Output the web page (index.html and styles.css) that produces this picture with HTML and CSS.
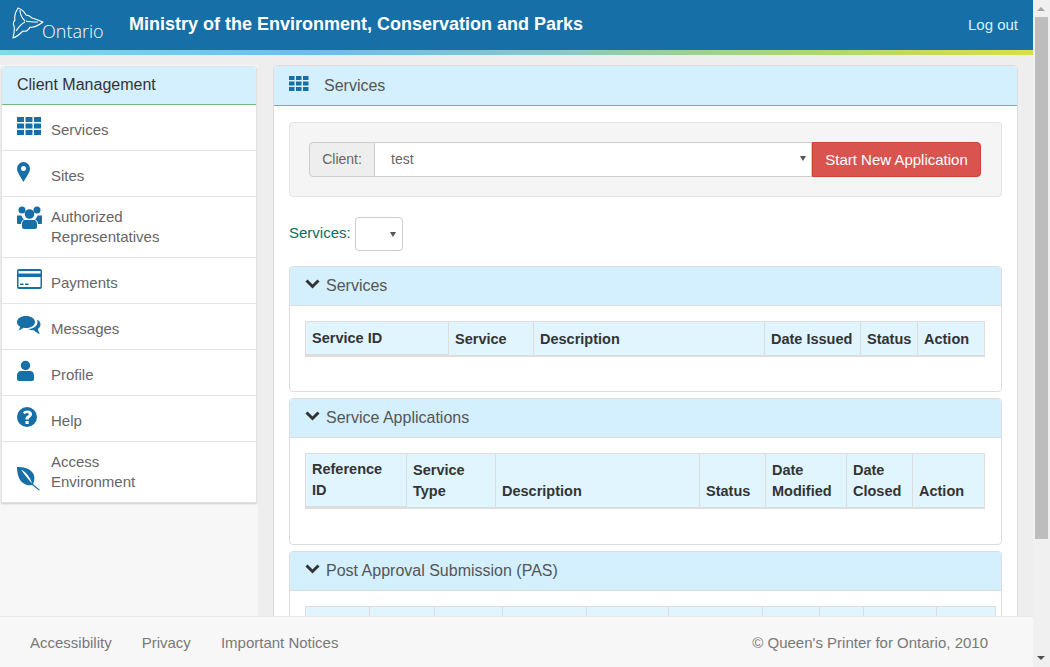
FILE: index.html
```html
<!DOCTYPE html>
<html lang="en">
<head>
    <meta charset="UTF-8">
    <title>Ministry of the Environment, Conservation and Parks</title>
    <link rel="stylesheet" href="styles.css">
</head>
<body>

<div class="window">
    <div class="viewport">

        <header class="topbar">
            <a class="logo">
                <svg class="trillium" width="34" height="32" viewBox="0 0 34 32" fill="none" stroke="#fff" stroke-width="1.1" stroke-linejoin="round">
                    <path d="M6 1 C9 2 12 4 14 8 C16 8 18 9 20 11 C24 12 28 14 31 15 C27 18 22 21 18 20 C17 23 14 25 11 24 C8 27 5 30 1 31 C2 27 3 23 2 19 C1 17 1 15 3 13 C2 9 4 4 6 1 Z"/>
                    <path d="M8 3 C8 7 10 11 13 14 M4 24 C6 21 9 17 13 15 M26 15 C22 15 17 15 14 14"/>
                </svg>
                <span class="wordmark">Ontario</span>
            </a>
            <div class="ministry">Ministry of the Environment, Conservation and Parks</div>
            <a class="logout">Log out</a>
        </header>
        <div class="strip"></div>

        <div class="layout">
            <aside class="sidebar">
                <div class="side-panel">
                    <div class="side-heading">Client Management</div>
                    <ul class="menu">
                        <li class="menu-item single">
                            <svg class="icon" width="26" height="26" viewBox="0 0 26 26"><path d="M0 4h7v5H0zM8.500 4h7v5h-7zM17 4h7v5h-7zM0 10.500h7v5H0zM8.500 10.500h7v5h-7zM17 10.500h7v5h-7zM0 17h7v5H0zM8.500 17h7v5h-7zM17 17h7v5h-7z"/></svg>
                            <span class="menu-label">Services</span>
                        </li>
                        <li class="menu-item single">
                            <svg class="icon" width="26" height="26" viewBox="0 0 26 26"><path fill-rule="evenodd" d="M6.500 3a6.500 6.500 0 0 1 6.500 6.500c0 4-4 9-6.500 13.500C4 18.500 0 13.500 0 9.500A6.500 6.500 0 0 1 6.500 3zm0 4a2.500 2.500 0 1 0 0 5 2.500 2.500 0 0 0 0-5z"/></svg>
                            <span class="menu-label">Sites</span>
                        </li>
                        <li class="menu-item">
                            <svg class="icon" width="26" height="26" viewBox="0 0 26 26"><circle cx="5" cy="5" r="3.500"/><circle cx="20" cy="5" r="3.500"/><circle cx="12.500" cy="9" r="4.800"/><path d="M0 10.500h4.500c.5 2 1.500 3 2.500 3.800C5 15.500 4 17 4 19H1c-1 0-1-1-1-2zM25 10.500h-4.500c-.5 2-1.500 3-2.500 3.800 2 1.200 3 2.700 3 4.700h3c1 0 1-1 1-2zM8 15h9c2 0 3 2 3 4v3c0 1-1 2-2 2H7c-1 0-2-1-2-2v-3c0-2 1-4 3-4z"/></svg>
                            <span class="menu-label">Authorized<br>Representatives</span>
                        </li>
                        <li class="menu-item single">
                            <svg class="icon" width="26" height="26" viewBox="0 0 26 26"><path fill-rule="evenodd" d="M2 3h21a2 2 0 0 1 2 2v16a2 2 0 0 1-2 2H2a2 2 0 0 1-2-2V5a2 2 0 0 1 2-2zm-.5 2v2.500h22V5zm0 6v10h22V11zM3 17.500h3.500V19H3zM8 17.500h3.500V19H8z"/></svg>
                            <span class="menu-label">Payments</span>
                        </li>
                        <li class="menu-item single">
                            <svg class="icon" width="26" height="26" viewBox="0 0 26 26"><path d="M9 4c5 0 9 2.600 9 6s-4 6-9 6c-1 0-1.500 0-2.500-.2C5 17 3.500 18 1.500 18.500 2.500 17.300 3 16 3 14.500 1 13.500 0 12 0 10c0-3.400 4-6 9-6z"/><path d="M19.500 7.500C22 8.500 23.500 10 23.500 12.500c0 1.800-1 3.300-2.500 4.300 0 1.700.8 3.500 2 5.200-2.500-.7-4.500-2-6-3.800-2 .2-4-.3-6-1.200 5 0 9-2.500 9.500-6.500 0-1-.2-2-.5-3z"/></svg>
                            <span class="menu-label">Messages</span>
                        </li>
                        <li class="menu-item single">
                            <svg class="icon" width="26" height="26" viewBox="0 0 26 26"><circle cx="8.500" cy="7.500" r="4.700"/><path d="M4 13h9c2.500 0 4 2 4 4.500V21c0 1-1 2-2 2H2c-1 0-2-1-2-2v-3.500C0 15 1.500 13 4 13z"/></svg>
                            <span class="menu-label">Profile</span>
                        </li>
                        <li class="menu-item single">
                            <svg class="icon" width="26" height="26" viewBox="0 0 26 26"><path fill-rule="evenodd" d="M10 3a10 10 0 1 1 0 20 10 10 0 0 1 0-20zM8.500 17v3h3.200v-3zM10.300 6.500c-2 0-3.500.8-4.300 2.300l2 1.500c.5-.8 1.200-1.300 2.100-1.300s1.600.5 1.600 1.200c0 .6-.4 1-1.300 1.600-1 .7-1.900 1.400-1.900 3v.7h3.200v-.5c0-.7.400-1 1.300-1.600 1.100-.7 2-1.600 2-3.300 0-2.300-2-3.600-4.700-3.600z"/></svg>
                            <span class="menu-label">Help</span>
                        </li>
                        <li class="menu-item">
                            <svg class="icon icon-low" width="26" height="26" viewBox="0 0 26 26"><path fill-rule="evenodd" d="M0 1c6 0 12 1 15 5 3 3 3 8 1 12l7 6-1 .5-7-5.500c-5 1-9-1-12-5C1 10.500 0 6 0 1zm4 2.500c3 5 7 9 11 14-1-4.500-5-11-11-14z"/></svg>
                            <span class="menu-label">Access<br>Environment</span>
                        </li>
                    </ul>
                </div>
            </aside>

            <main class="content">
                <div class="content-heading">
                    <svg width="20" height="16" viewBox="0 0 20 16"><path d="M0 0h5.500v4H0zM7 0h5.500v4H7zM14 0h5.500v4H14zM0 5.500h5.500v4H0zM7 5.500h5.500v4H7zM14 5.500h5.500v4H14zM0 11h5.500v4H0zM7 11h5.500v4H7zM14 11h5.500v4H14z"/></svg>
                    <span>Services</span>
                </div>
                <div class="content-body">

                    <div class="well">
                        <div class="input-group">
                            <span class="addon">Client:</span>
                            <div class="client-select">test</div>
                            <button class="btn-danger">Start New Application</button>
                        </div>
                    </div>

                    <div class="filter">
                        <label class="filter-label">Services:</label>
                        <div class="small-select"></div>
                    </div>

                    <section class="panel">
                        <div class="panel-heading">
                            <svg class="chevron" width="15" height="10" viewBox="0 0 15 10"><path d="M1.500 1.500l6 6 6-6" fill="none" stroke-width="3"/></svg>
                            Services
                        </div>
                        <div class="panel-body body-one">
                            <table class="grid grid-one">
                                <thead>
                                    <tr>
                                        <th class="sorted">Service ID</th>
                                        <th>Service</th>
                                        <th>Description</th>
                                        <th>Date Issued</th>
                                        <th>Status</th>
                                        <th>Action</th>
                                    </tr>
                                </thead>
                            </table>
                        </div>
                    </section>

                    <section class="panel">
                        <div class="panel-heading">
                            <svg class="chevron" width="15" height="10" viewBox="0 0 15 10"><path d="M1.500 1.500l6 6 6-6" fill="none" stroke-width="3"/></svg>
                            Service Applications
                        </div>
                        <div class="panel-body body-two">
                            <table class="grid grid-two">
                                <thead>
                                    <tr>
                                        <th class="sorted">Reference ID</th>
                                        <th>Service Type</th>
                                        <th>Description</th>
                                        <th>Status</th>
                                        <th>Date Modified</th>
                                        <th>Date Closed</th>
                                        <th>Action</th>
                                    </tr>
                                </thead>
                            </table>
                        </div>
                    </section>

                    <section class="panel">
                        <div class="panel-heading">
                            <svg class="chevron" width="15" height="10" viewBox="0 0 15 10"><path d="M1.500 1.500l6 6 6-6" fill="none" stroke-width="3"/></svg>
                            Post Approval Submission (PAS)
                        </div>
                        <div class="panel-body">
                            <table class="grid grid-three">
                                <thead>
                                    <tr>
                                        <th>Service ID</th>
                                        <th>Service Type</th>
                                        <th>Version</th>
                                        <th>Reference ID</th>
                                        <th>Request Type</th>
                                        <th></th>
                                        <th></th>
                                        <th>Due Date</th>
                                        <th>Date Received</th>
                                        <th></th>
                                    </tr>
                                </thead>
                            </table>
                        </div>
                    </section>

                </div>
            </main>
        </div>

        <footer class="footer">
            <nav class="footer-links">
                <a>Accessibility</a>
                <a>Privacy</a>
                <a>Important Notices</a>
            </nav>
            <span>&copy; Queen's Printer for Ontario, 2010</span>
        </footer>
    </div>

    <div class="scrollbar">
        <span class="arrow-up"></span>
        <span class="thumb"></span>
        <span class="arrow-down"></span>
    </div>
</div>

</body>
</html>
```

FILE: styles.css
```css
* {
    box-sizing: border-box;
}

body {
    margin: 0;
    font-family: "Liberation Sans", Arial, sans-serif;
    font-size: 15px;
    color: #555;
    background-color: #eee;
}

.window {
    display: flex;
    height: 667px;
    overflow: hidden;
}

.viewport {
    position: relative;
    width: 1033px;
    height: 667px;
    overflow: hidden;
}

/* header */
.topbar {
    display: flex;
    align-items: center;
    height: 50px;
    padding: 0 15px 0 11px;
    background-color: #166fa6;
    color: #fff;
}

.logo {
    position: relative;
    display: block;
    width: 118px;
    height: 50px;
}

.trillium {
    position: absolute;
    left: 1px;
    top: 7px;
}

.wordmark {
    position: absolute;
    left: 31px;
    top: 19px;
    font-family: "Open Sans", sans-serif;
    font-weight: 300;
    font-size: 18px;
    line-height: 24px;
}

.ministry {
    flex: 1;
    padding-bottom: 2px;
    font-size: 18px;
    font-weight: bold;
}

.logout {
    font-size: 15px;
    padding-bottom: 1px;
    color: #d9f1fc;
}

.strip {
    height: 5px;
    background: linear-gradient(to right, #7fdde6 0%, #6cbcf0 30%, #8cc9c0 55%, #b3d66a 80%, #d4e04f 100%);
}

/* two columns */
.layout {
    display: flex;
    align-items: flex-start;
    gap: 15px;
    height: 612px;
    padding-top: 10px;
}

.sidebar {
    width: 258px;
    height: 602px;
    padding-left: 1px;
    padding-right: 1px;
    background-color: #f7f7f7;
}

.side-panel {
    margin-top: 1px;
    background-color: #fff;
    border: 1px solid #e2e2e2;
    border-top-color: #d8e8ee;
    border-radius: 4px 4px 0 0;
    box-shadow: 0 1px 2px rgba(0, 0, 0, 0.18);
}

.side-heading {
    height: 38px;
    padding-left: 15px;
    font-size: 16px;
    line-height: 36px;
    color: #333;
    background-color: #d4f0fe;
    border-bottom: 1px solid #7ab87a;
    border-radius: 4px 4px 0 0;
}

.menu {
    list-style: none;
    margin: 0;
    padding: 0;
}

.menu-item {
    display: flex;
    padding: 10px 0 10px 15px;
    border-bottom: 1px solid #e4e4e4;
    line-height: 20px;
    color: #666;
}

.menu-item:last-child {
    border-bottom: none;
}

.menu-item.single .menu-label {
    padding-top: 5px;
}

.icon {
    flex: none;
    margin-top: -2px;
    margin-right: 8px;
    fill: #166fa6;
}

.icon-low {
    margin-top: 14px;
}

/* main panel */
.content {
    width: 745px;
    background-color: #fff;
    border: 1px solid #ddd;
    border-radius: 4px 4px 0 0;
    height: 640px;
}

.content-heading {
    display: flex;
    align-items: center;
    gap: 15px;
    height: 40px;
    padding-left: 15px;
    font-size: 16px;
    color: #555;
    background-color: #d4f0fe;
    border-bottom: 1px solid #7ab87a;
    border-radius: 4px 4px 0 0;
}

.content-heading svg {
    margin-top: -3px;
    fill: #166fa6;
}

.content-body {
    padding: 16px 15px 0;
}

.well {
    height: 75px;
    padding: 19px;
    background-color: #f5f5f5;
    border: 1px solid #e3e3e3;
    border-radius: 4px;
}

.input-group {
    display: flex;
    height: 35px;
}

.addon {
    width: 66px;
    line-height: 33px;
    text-align: center;
    font-size: 14px;
    color: #666;
    background-color: #eee;
    border: 1px solid #ccc;
    border-radius: 4px 0 0 4px;
}

.client-select {
    position: relative;
    width: 437px;
    padding-left: 16px;
    font-size: 14px;
    line-height: 32px;
    color: #666;
    background-color: #fff;
    border: 1px solid #ccc;
    border-left: none;
}

.client-select::after,
.small-select::after {
    content: "";
    position: absolute;
    top: 13px;
    right: 5px;
    border-top: 5px solid #555;
    border-left: 3px solid transparent;
    border-right: 3px solid transparent;
}

.btn-danger {
    width: 169px;
    padding: 0;
    font-family: inherit;
    font-size: 15px;
    color: #fff;
    background-color: #d9534f;
    border: 1px solid #d43f3a;
    border-radius: 0 4px 4px 0;
}

.filter {
    display: flex;
    align-items: center;
    gap: 4px;
    height: 34px;
    margin-top: 20px;
    margin-bottom: 15px;
}

.filter-label {
    color: #0b6e5e;
    padding-bottom: 3px;
}

.small-select {
    position: relative;
    width: 48px;
    height: 34px;
    background-color: #fff;
    border: 1px solid #ccc;
    border-radius: 4px;
}

.small-select::after {
    top: 14px;
    right: 6px;
}

/* collapsible panels */
.panel {
    margin-bottom: 6px;
    background-color: #fff;
    border: 1px solid #ddd;
    border-radius: 4px;
}

.panel-heading {
    display: flex;
    align-items: center;
    gap: 6px;
    height: 39px;
    padding-left: 15px;
    font-size: 16px;
    color: #555;
    background-color: #d4f0fe;
    border-bottom: 1px solid #ddd;
    border-radius: 3px 3px 0 0;
}

.chevron {
    margin-top: -4px;
    stroke: #333;
}

.panel-body {
    padding: 15px 15px 0;
}

.body-one {
    height: 85px;
}

.body-two {
    height: 106px;
}

.grid {
    border-collapse: separate;
    border-spacing: 0;
    table-layout: fixed;
    border-top: 1px solid #ddd;
}

.grid th {
    padding: 5px 6px;
    font-size: 14.5px;
    line-height: 21px;
    font-weight: bold;
    text-align: left;
    vertical-align: bottom;
    color: #333;
    background-color: #e1f5fe;
    border-right: 1px solid #ddd;
    border-bottom: 2px solid #ddd;
}

.grid th.sorted {
    border-bottom-width: 3px;
}

.grid th:first-child {
    border-left: 1px solid #ddd;
}

.grid-one {
    width: 680px;
}

.grid-one th {
    padding-top: 6px;
}

.grid-one th:nth-child(1) { width: 144px; }
.grid-one th:nth-child(2) { width: 85px; }
.grid-one th:nth-child(3) { width: 231px; }
.grid-one th:nth-child(4) { width: 96px; }
.grid-one th:nth-child(5) { width: 57px; }

.grid-two {
    width: 680px;
}

.grid-two th:nth-child(1) { width: 102px; }
.grid-two th:nth-child(2) { width: 89px; }
.grid-two th:nth-child(3) { width: 204px; }
.grid-two th:nth-child(4) { width: 66px; }
.grid-two th:nth-child(5) { width: 81px; }
.grid-two th:nth-child(6) { width: 66px; }

.grid-three {
    width: 691px;
}

.grid-three th:nth-child(1) { width: 65px; }
.grid-three th:nth-child(2) { width: 65px; }
.grid-three th:nth-child(3) { width: 68px; }
.grid-three th:nth-child(4) { width: 84px; }
.grid-three th:nth-child(5) { width: 82px; }
.grid-three th:nth-child(6) { width: 94px; }
.grid-three th:nth-child(7) { width: 57px; }
.grid-three th:nth-child(8) { width: 44px; }
.grid-three th:nth-child(9) { width: 73px; }

/* footer sits over the scrolled content */
.footer {
    position: absolute;
    left: 0;
    right: 0;
    bottom: 0;
    display: flex;
    align-items: center;
    justify-content: space-between;
    height: 51px;
    padding: 0 45px 0 30px;
    color: #777;
    background-color: #f7f7f7;
    border-top: 1px solid #e7e7e7;
}

.footer-links {
    display: flex;
    gap: 30px;
}

/* page scrollbar */
.scrollbar {
    position: relative;
    display: flex;
    flex-direction: column;
    align-items: center;
    width: 17px;
    height: 667px;
    background-color: #f0f0f0;
}

.arrow-up,
.arrow-down {
    position: absolute;
    left: 4px;
    border-left: 4px solid transparent;
    border-right: 4px solid transparent;
}

.arrow-up {
    top: 7px;
    border-bottom: 4px solid #a3a3a3;
}

.arrow-down {
    bottom: 7px;
    border-top: 4px solid #505050;
}

.thumb {
    width: 13px;
    height: 522px;
    margin-top: 17px;
    background-color: #bdbdbd;
}
```
